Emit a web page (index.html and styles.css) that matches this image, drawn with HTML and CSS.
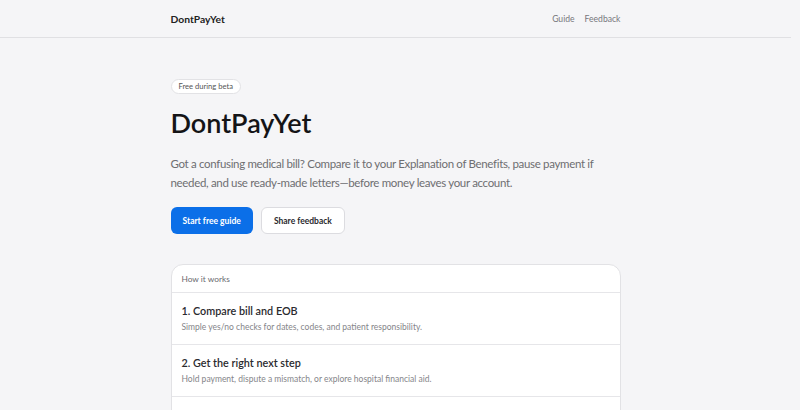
FILE: index.html
```html
<!DOCTYPE html>
<html lang="en">
<head>
  <meta charset="UTF-8" />
  <meta name="viewport" content="width=device-width, initial-scale=1.0" />
  <title>DontPayYet</title>
  <link rel="stylesheet" href="styles.css">
</head>
<body>
  <header class="topbar">
    <div class="wrap topbar-inner">
      <a class="brand" href="#">DontPayYet</a>
      <nav class="nav">
        <a href="#">Guide</a>
        <a href="#">Feedback</a>
      </nav>
    </div>
  </header>

  <main class="wrap hero">
    <span class="badge">Free during beta</span>
    <h1>DontPayYet</h1>
    <p class="lead">Got a confusing medical bill? Compare it to your Explanation of Benefits, pause payment if needed, and use ready-made letters—before money leaves your account.</p>

    <div class="actions">
      <a class="btn btn-primary" href="#">Start free guide</a>
      <a class="btn btn-secondary" href="#">Share feedback</a>
    </div>

    <section class="card">
      <div class="card-head">How it works</div>
      <div class="step">
        <h3>1. Compare bill and EOB</h3>
        <p>Simple yes/no checks for dates, codes, and patient responsibility.</p>
      </div>
      <div class="step">
        <h3>2. Get the right next step</h3>
        <p>Hold payment, dispute a mismatch, or explore hospital financial aid.</p>
      </div>
      <div class="step">
        <h3>3. Send a ready-made letter</h3>
        <p>Copy, fill in your details, and send it before you pay.</p>
      </div>
    </section>
  </main>
</body>
</html>
```

FILE: styles.css
```css
body {
  margin: 0;
  padding-right: 9px;
  background: #f5f5f7;
  font-family: "Lato", "Liberation Sans", sans-serif;
  color: #1f1f22;
}
a {
  text-decoration: none;
  color: inherit;
}
.wrap {
  width: 450px;
  margin: 0 auto;
}
.topbar {
  height: 37px;
  border-bottom: 1px solid #e0e0e3;
  background: #f5f5f7;
}
.topbar-inner {
  height: 100%;
  display: flex;
  align-items: center;
  justify-content: space-between;
}
.brand {
  font-size: 10.3px;
  font-weight: 700;
  color: #222;
}
.nav {
  display: flex;
  gap: 10px;
  font-size: 8.6px;
  color: #77777c;
}
.hero {
  display: flex;
  flex-direction: column;
  align-items: flex-start;
  padding-top: 41px;
}
.badge {
  padding: 2px 7px;
  font-size: 7.6px;
  line-height: 9px;
  color: #555;
  background: #fff;
  border: 1px solid #e2e2e5;
  border-radius: 999px;
}
h1 {
  margin: 13px 0 0;
  font-size: 27px;
  font-weight: 600;
  color: #141416;
  line-height: 32px;
}
.lead {
  margin: 15px 0 0;
  font-size: 11.5px;
  letter-spacing: -0.33px;
  line-height: 19px;
  color: #6e6e71;
}
.actions {
  display: flex;
  gap: 8px;
  margin-top: 15px;
}
.btn {
  display: flex;
  align-items: center;
  height: 27px;
  padding: 0 12px;
  font-size: 8.5px;
  font-weight: 700;
  border-radius: 6px;
  box-sizing: border-box;
}
.btn-primary {
  background: #0b6fe8;
  color: #fff;
}
.btn-secondary {
  background: #fff;
  color: #2a2a2e;
  border: 1px solid #dcdce0;
}
.card {
  align-self: stretch;
  margin-top: 30px;
  background: #fff;
  border: 1px solid #e2e2e5;
  border-radius: 12px;
}
.card-head {
  height: 27px;
  display: flex;
  align-items: center;
  padding: 0 10px;
  font-size: 8.3px;
  color: #6a6a70;
  border-bottom: 1px solid #e6e6e9;
}
.step {
  padding: 10px 10px 11px;
  border-bottom: 1px solid #e6e6e9;
}
.step h3 {
  margin: 0;
  font-size: 10.8px;
  font-weight: 600;
  color: #2a2a2e;
  line-height: 16px;
}
.step p {
  margin: 2px 0 0;
  font-size: 8.5px;
  color: #85858a;
  line-height: 12px;
}
```
